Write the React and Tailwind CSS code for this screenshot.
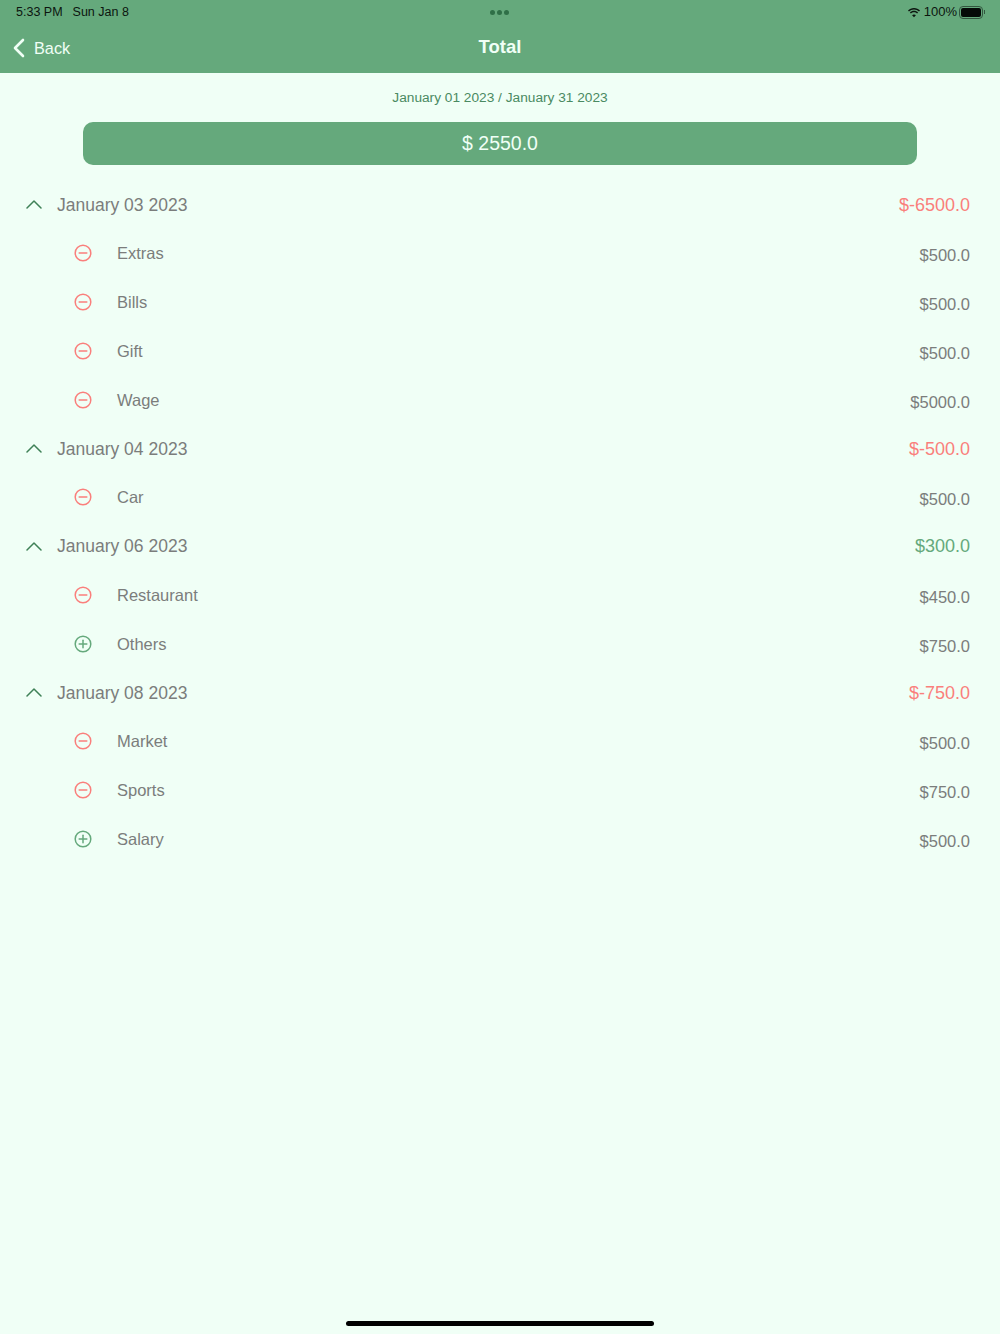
import React from "react";

const groups = [
  {
    date: "January 03 2023",
    total: "$-6500.0",
    tone: "text-[#fa7f7c]",
    items: [
      { name: "Extras", amount: "$500.0", minus: true },
      { name: "Bills", amount: "$500.0", minus: true },
      { name: "Gift", amount: "$500.0", minus: true },
      { name: "Wage", amount: "$5000.0", minus: true },
    ],
  },
  {
    date: "January 04 2023",
    total: "$-500.0",
    tone: "text-[#fa7f7c]",
    items: [{ name: "Car", amount: "$500.0", minus: true }],
  },
  {
    date: "January 06 2023",
    total: "$300.0",
    tone: "text-[#65a97c]",
    items: [
      { name: "Restaurant", amount: "$450.0", minus: true },
      { name: "Others", amount: "$750.0", minus: false },
    ],
  },
  {
    date: "January 08 2023",
    total: "$-750.0",
    tone: "text-[#fa7f7c]",
    items: [
      { name: "Market", amount: "$500.0", minus: true },
      { name: "Sports", amount: "$750.0", minus: true },
      { name: "Salary", amount: "$500.0", minus: false },
    ],
  },
];

function RoundIcon({ minus }) {
  return (
    <svg
      width="18"
      height="18"
      viewBox="0 0 18 18"
      fill="none"
      strokeWidth="1.5"
      strokeLinecap="round"
      className={minus ? "-mt-[1px] stroke-[#fa7f7c]" : "-mt-[1px] stroke-[#65a97c]"}
    >
      <circle cx="9" cy="9" r="7.8" />
      <path d="M5.200 9h7.600" />
      {!minus && <path d="M9 5.200v7.600" />}
    </svg>
  );
}

function Row({ item }) {
  return (
    <div className="flex h-[48.8px] items-center pl-[74px] pr-[30px]">
      <RoundIcon minus={item.minus} />
      <span className="ml-[25px] text-[16.5px] text-[#7b7d7c]">{item.name}</span>
      <span className="ml-auto mt-1 text-[16.5px] text-[#7b7d7c]">{item.amount}</span>
    </div>
  );
}

function Group({ group }) {
  return (
    <div>
      <div className="flex h-[48.8px] items-center pl-[26px] pr-[30px]">
        <svg
          width="16"
          height="9"
          viewBox="0 0 16 9"
          fill="none"
          stroke="#3f8157"
          strokeWidth="1.5"
          strokeLinecap="round"
          strokeLinejoin="round"
          className="-mt-[1px]"
        >
          <path d="M1 8 8 1l7 7" />
        </svg>
        <span className="ml-[15px] -mt-[0.5px] text-[17.5px] text-[#7b7d7c]">{group.date}</span>
        <span className={`ml-auto -mt-[0.5px] text-lg ${group.tone}`}>{group.total}</span>
      </div>
      {group.items.map((item) => (
        <Row key={item.name} item={item} />
      ))}
    </div>
  );
}

export default function App() {
  return (
    <div className="relative flex h-[1334px] w-[1000px] flex-col bg-[#f0fff6] font-['Liberation_Sans',sans-serif]">
      {/* status bar + nav */}
      <div className="h-[73px] bg-[#65a97c]">
        <div className="flex h-6 items-center pl-4 pr-[15px] text-[12.5px] text-[#0c150f]">
          <span>5:33 PM</span>
          <span className="ml-[10px]">Sun Jan 8</span>
          <div className="ml-auto flex items-center gap-[3px]">
            <svg width="14" height="11" viewBox="0 0 14 11" fill="#0c150f">
              <path d="M7 2.600c2 0 3.700.8 5 2l1-1.100C11.500 2 9.400 1 7 1S2.500 2 1 3.500l1 1.100c1.300-1.200 3-2 5-2z" />
              <path d="M7 5.300c1.200 0 2.300.5 3.100 1.200l1-1.100C10 4.400 8.600 3.800 7 3.800s-3 .6-4.100 1.600l1 1.100c.8-.7 1.900-1.200 3.100-1.200z" />
              <path d="M7 7.600c-.8 0-1.400.3-1.900.7L7 10.300l1.900-2c-.5-.4-1.100-.7-1.900-.7z" />
            </svg>
            <span className="-mr-[1px] text-[13px]">100%</span>
            <div className="flex items-center">
              <div className="h-[13px] w-[24px] rounded-[4px] border border-[#33573f] p-[1px]">
                <div className="h-full w-full rounded-[2px] bg-[#050a07]" />
              </div>
              <div className="ml-[1px] h-1 w-[1px] bg-[#33573f]" />
            </div>
          </div>
        </div>
        <div className="relative flex h-[49px] items-center justify-center">
          <div className="absolute left-[13px] top-[13px] flex items-center">
            <svg
              width="12"
              height="20"
              viewBox="0 0 12 20"
              fill="none"
              stroke="#f0fff6"
              strokeWidth="2.6"
              strokeLinecap="round"
              strokeLinejoin="round"
              className="-mt-[2px]"
            >
              <path d="M10 2 2 10l8 8" />
            </svg>
            <span className="ml-[9px] -mt-[1px] text-[16.3px] text-[#f0fff6]">Back</span>
          </div>
          <span className="-mt-[3px] text-[18.500px] font-bold text-[#f0fff6]">Total</span>
        </div>
      </div>

      {/* multitasking dots over the status bar */}
      <div className="absolute left-[490px] top-[10px] flex gap-[2px]">
        <div className="size-[5px] rounded-full bg-[#2f6f47]" />
        <div className="size-[5px] rounded-full bg-[#2f6f47]" />
        <div className="size-[5px] rounded-full bg-[#2f6f47]" />
      </div>

      <div className="mt-4 text-center text-[13.700px] leading-[18px] text-[#4a8a62]">
        January 01 2023 / January 31 2023
      </div>

      <div className="mx-[83px] mt-[15px] flex h-[43px] items-center justify-center rounded-[10px] bg-[#65a97c] text-[19.5px] text-[#f0fff6]">
        $ 2550.0
      </div>

      <div className="mt-[15.600px]">
        {groups.map((group) => (
          <Group key={group.date} group={group} />
        ))}
      </div>

      {/* home indicator */}
      <div className="absolute bottom-2 left-[346px] h-[5px] w-[308px] rounded-full bg-black" />
    </div>
  );
}
